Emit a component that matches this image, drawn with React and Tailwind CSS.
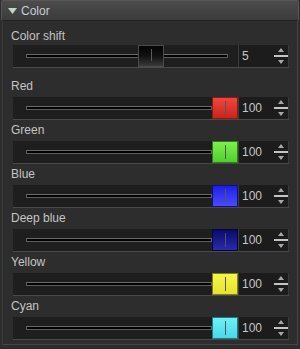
const rows = [
  { label: "Red", value: "100", thumb: "from-[#f0463c] to-[#c8241c]", edge: "border-[#8a1a14]" },
  { label: "Green", value: "100", thumb: "from-[#7cf04e] to-[#4fd02c]", edge: "border-[#2f7a1c]" },
  { label: "Blue", value: "100", thumb: "from-[#1c1ce8] to-[#4a4af8]", edge: "border-[#10107a]" },
  { label: "Deep blue", value: "100", thumb: "from-[#0a0a6a] to-[#2a2ab0]", edge: "border-[#06063a]" },
  { label: "Yellow", value: "100", thumb: "from-[#f6f64a] to-[#e4e42c]", edge: "border-[#80801a]" },
  { label: "Cyan", value: "100", thumb: "from-[#6ef0f8] to-[#48d8e8]", edge: "border-[#1c7a80]" },
];

function Spin({ value }) {
  return (
    <div className="w-[51px] h-full bg-[#1c1c1c] border-l border-[#3c3c3c] border-r border-r-[#3a3a3a] flex items-center relative">
      <span className="pl-[3px] text-[12px] text-[#c6c6c6]">{value}</span>
      <div className="absolute right-0 top-0 bottom-0 w-[14px] flex flex-col items-center justify-center">
        <svg width="6" height="4" viewBox="0 0 6 4" className="mb-[3px]">
          <path d="M3 0 L6 4 L0 4 Z" fill="#a8a8a8" />
        </svg>
        <div className="w-[14px] h-[2px] bg-[#c4c4c4]" />
        <svg width="6" height="4" viewBox="0 0 6 4" className="mt-[3px]">
          <path d="M0 0 L6 0 L3 4 Z" fill="#a8a8a8" />
        </svg>
      </div>
    </div>
  );
}

function Track() {
  return <div className="h-[4px] bg-black border border-[#5e5e5e] border-t-[#6a6a6a]" />;
}

function Row({ label, value, children, first }) {
  return (
    <div>
      <div className={`${first ? "pt-[5px]" : "pt-[3px]"} h-[21px] pl-[8px] text-[12px] leading-[14px] text-[#c4c4c4]`}>
        {label}
      </div>
      <div className="flex h-[23px] ml-[10px] border-b border-[#4a4a4a]">
        <div className="flex-1 bg-[#1e1e1e] relative flex items-center">{children}</div>
        <Spin value={value} />
      </div>
    </div>
  );
}

export default function App() {
  return (
    <div className="w-[300px] h-[349px] bg-[#2d2d2d] relative font-['Liberation_Sans',Arial,sans-serif] overflow-hidden">
      <div className="mx-[1px] h-[21px] bg-gradient-to-b from-[#4c4c4c] to-[#3b3b3b] border border-[#555] border-b-[#222] rounded-t-[2px] flex items-center pl-[6px]">
        <svg width="9" height="6" viewBox="0 0 9 6" className="mr-[4px]">
          <path d="M0 0 L9 0 L4.5 6 Z" fill="#c4d2c4" />
        </svg>
        <span className="text-[12px] text-[#c8ccd6]">Color</span>
      </div>
      <div className="ml-[2px] mr-[2px] h-[324px] border-l border-r border-b border-l-[#3a3a3a] border-r-[#454545] border-b-[#454545] pr-[8px]">
        <div className="pt-[3px]">
          <Row label="Color shift" value="5" first>
            <div className="w-full pl-[13px] pr-[10px]">
              <Track />
            </div>
            <div className="absolute top-0 bottom-0 left-[125px] w-[26px] bg-gradient-to-b from-[#050505] via-[#111] to-[#3a3a3a] border border-[#4a4a4a] flex justify-center">
              <div className="w-[1px] mt-[3px] mb-[5px] bg-[#5a5a5a]" />
            </div>
          </Row>
          <div className="h-[8px]" />
          {rows.map((r) => (
            <Row key={r.label} label={r.label} value={r.value}>
              <div className="w-full pl-[13px] pr-[26px]">
                <Track />
              </div>
              <div className={`absolute top-0 bottom-0 right-0 w-[26px] bg-gradient-to-b ${r.thumb} border ${r.edge} flex justify-center`}>
                <div className="w-[1px] mt-[3px] mb-[3px] bg-[#555]" />
              </div>
            </Row>
          ))}
        </div>
      </div>
    </div>
  );
}
